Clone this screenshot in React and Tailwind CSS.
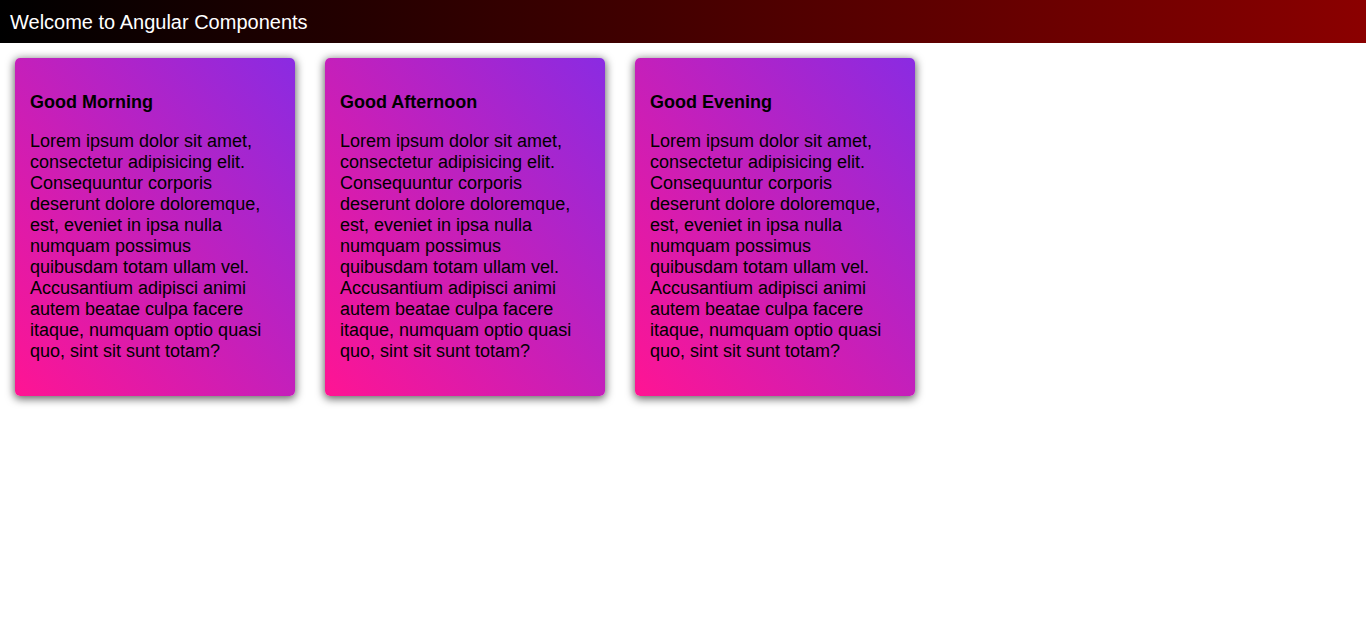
const cards = ['Good Morning', 'Good Afternoon', 'Good Evening'];

const lorem =
  'Lorem ipsum dolor sit amet, consectetur adipisicing elit. Consequuntur corporis deserunt dolore doloremque, est, eveniet in ipsa nulla numquam possimus quibusdam totam ullam vel. Accusantium adipisci animi autem beatae culpa facere itaque, numquam optio quasi quo, sint sit sunt totam?';

function Card({ title }) {
  return (
    <div className="w-[280px] rounded-[5px] bg-[linear-gradient(to_top_right,#ff1493,#8a2be2)] px-[15px] pt-[16px] pb-[16px] text-black shadow-[0_2px_9px_1px_rgba(0,0,0,0.6)]">
      <h3 className="my-[18px] text-[18px] font-bold leading-[21px]">{title}</h3>
      <p className="mb-[18px] text-[18px] leading-[21px]">{lorem}</p>
    </div>
  );
}

export default function App() {
  return (
    <div className="min-h-screen bg-white font-['Liberation_Sans',Arial,sans-serif]">
      <header className="flex h-[43px] items-center bg-[linear-gradient(to_right,#000000,#8b0000)] px-[10px] text-[20px] text-white">
        Welcome to Angular Components
      </header>
      <div className="flex items-start gap-[30px] px-[15px] pt-[15px]">
        {cards.map((c) => (
          <Card key={c} title={c} />
        ))}
      </div>
    </div>
  );
}
